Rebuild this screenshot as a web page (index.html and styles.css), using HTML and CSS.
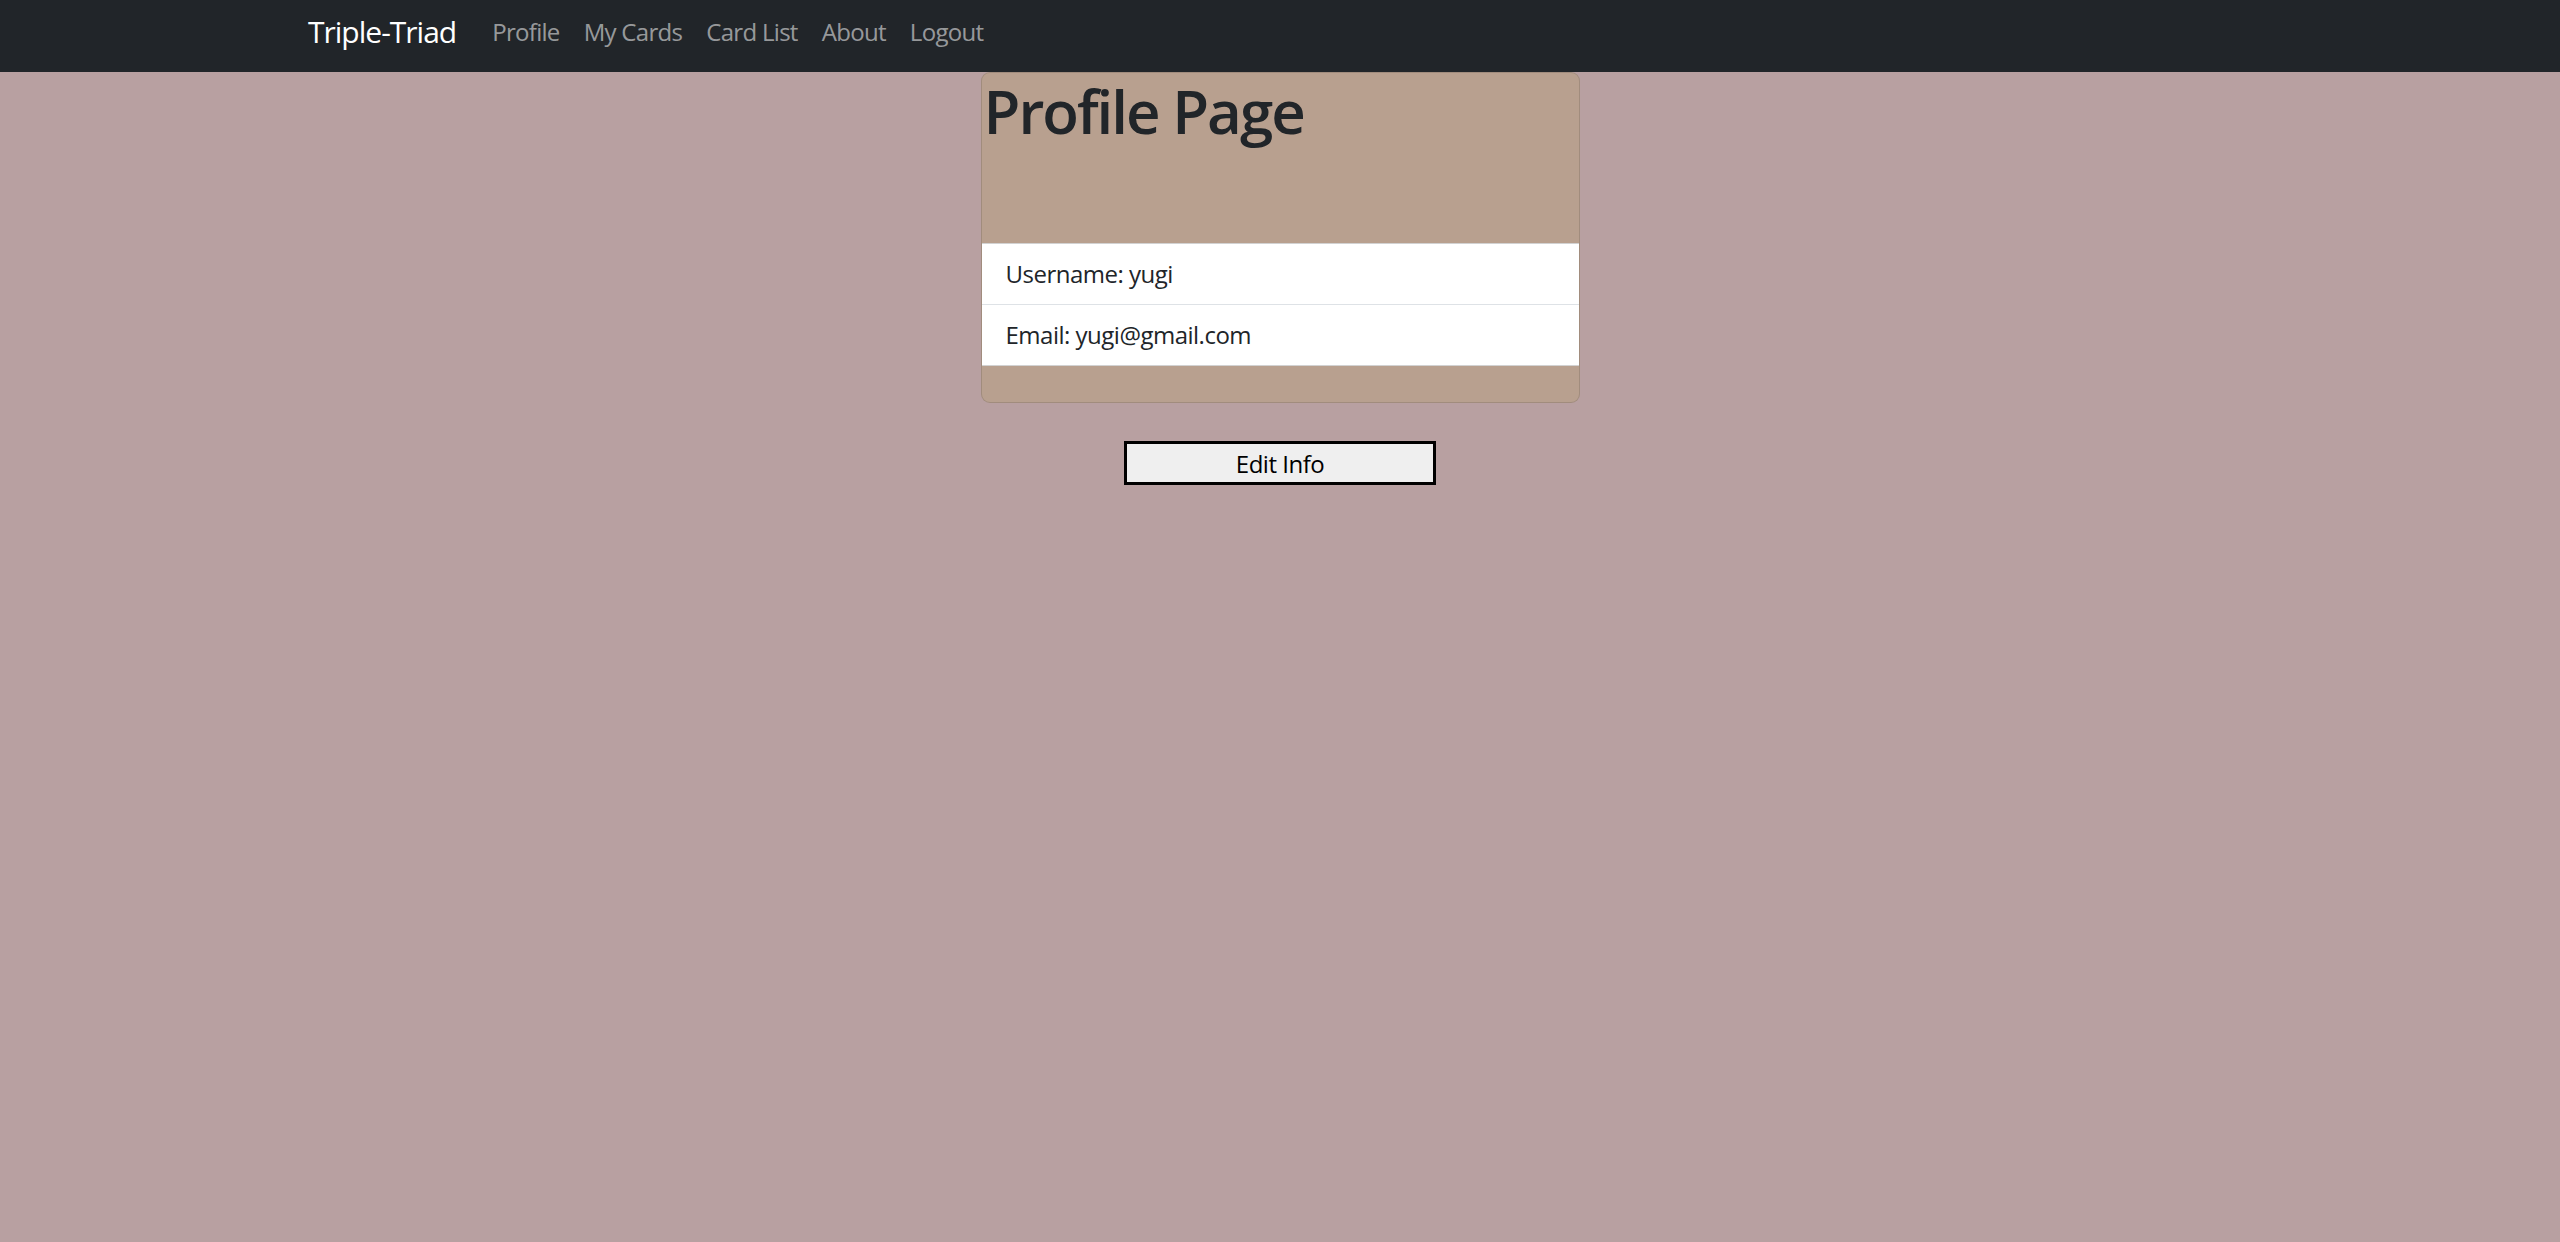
FILE: index.html
```html
<!DOCTYPE html>
<html lang="en">
<head>
<meta charset="utf-8">
<title>Triple-Triad</title>
<link rel="stylesheet" href="styles.css">
</head>
<body>
<nav class="navbar">
  <div class="nav-container">
    <a class="brand" href="#">Triple-Triad</a>
    <ul class="nav-links">
      <li><a href="#">Profile</a></li>
      <li><a href="#">My Cards</a></li>
      <li><a href="#">Card List</a></li>
      <li><a href="#">About</a></li>
      <li><a href="#">Logout</a></li>
    </ul>
  </div>
</nav>
<main class="main">
  <section class="card">
    <div class="card-top">
      <h1 class="title">Profile Page</h1>
    </div>
    <ul class="list">
      <li class="list-item">Username: yugi</li>
      <li class="list-item">Email: yugi@gmail.com</li>
    </ul>
    <div class="card-bottom"></div>
  </section>
  <button class="edit-btn" type="button">Edit Info</button>
</main>
</body>
</html>
```

FILE: styles.css
```css
* { box-sizing: border-box; }

html, body {
  margin: 0;
  padding: 0;
}

body {
  background: #b8a0a1;
  font-family: "Open Sans", "Noto Sans", "Liberation Sans", sans-serif;
  color: #212529;
  min-height: 1242px;
}

.navbar {
  background: #212529;
  height: 72px;
  display: flex;
  align-items: center;
  padding-bottom: 9px;
}

.nav-container {
  width: 1980px;
  margin: 0 auto;
  padding: 0 18px;
  display: flex;
  align-items: center;
}

.brand {
  color: #ffffff;
  text-decoration: none;
  font-size: 30px;
  margin-right: 24px;
  letter-spacing: -1px;
}

.nav-links {
  list-style: none;
  margin: 0;
  padding: 0;
  display: flex;
}

.nav-links a {
  display: block;
  padding: 0 12px;
  color: rgba(255, 255, 255, 0.55);
  text-decoration: none;
  font-size: 24px;
  letter-spacing: -0.7px;
}

.main {
  display: flex;
  flex-direction: column;
  align-items: center;
}

.card {
  width: 599px;
  background: #b8a08f;
  border: 1px solid rgba(0, 0, 0, 0.12);
  border-radius: 9px;
}

.card-top {
  height: 170px;
  padding-top: 2px;
}

.title {
  margin: 0;
  font-size: 60px;
  font-weight: 600;
  line-height: 72px;
  letter-spacing: -2px;
  padding-left: 2px;
}

.list {
  list-style: none;
  margin: 0;
  padding: 0;
  background: #ffffff;
  border-top: 1px solid rgba(0, 0, 0, 0.175);
  border-bottom: 1px solid rgba(0, 0, 0, 0.175);
}

.list-item {
  padding: 12px 24px;
  font-size: 24px;
  line-height: 36px;
  letter-spacing: -0.5px;
}

.list-item + .list-item {
  border-top: 1px solid #dee2e6;
}

.card-bottom {
  height: 36px;
}

.edit-btn {
  margin-top: 38px;
  width: 312px;
  height: 44px;
  background: #efefef;
  border: 3px solid #000000;
  font-family: inherit;
  font-size: 24px;
  color: #000000;
  padding: 0;
  letter-spacing: -0.5px;
}
```
